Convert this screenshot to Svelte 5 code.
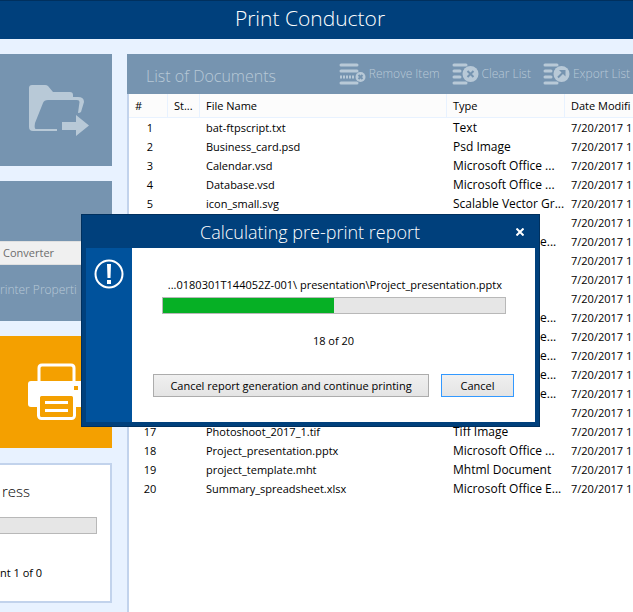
<script lang="ts">
  interface Doc {
    name: string
    type: string
  }

  const docs: Doc[] = [
    { name: 'bat-ftpscript.txt', type: 'Text' },
    { name: 'Business_card.psd', type: 'Psd Image' },
    { name: 'Calendar.vsd', type: 'Microsoft Office ...' },
    { name: 'Database.vsd', type: 'Microsoft Office ...' },
    { name: 'icon_small.svg', type: 'Scalable Vector Gr...' },
    { name: 'a.txt', type: 'Text' },
    { name: 'b.pdf', type: 'Acrobat Docume...' },
    { name: 'c.txt', type: 'Text' },
    { name: 'd.txt', type: 'Text' },
    { name: 'e.txt', type: 'Text' },
    { name: 'f.pdf', type: 'Acrobat Docume...' },
    { name: 'g.pdf', type: 'Acrobat Docume...' },
    { name: 'h.pdf', type: 'Acrobat Docume...' },
    { name: 'i.pdf', type: 'Acrobat Docume...' },
    { name: 'j.pdf', type: 'Acrobat Docume...' },
    { name: 'k.txt', type: 'Text' },
    { name: 'Photoshoot_2017_1.tif', type: 'Tiff Image' },
    { name: 'Project_presentation.pptx', type: 'Microsoft Office ...' },
    { name: 'project_template.mht', type: 'Mhtml Document' },
    { name: 'Summary_spreadsheet.xlsx', type: 'Microsoft Office E...' },
  ]

  let dialogOpen = $state(true)
  let progress = $state(50)
</script>

<div class="app">
  <header class="titlebar"><h1>Print Conductor</h1></header>

  <div class="main">
    <aside class="side">
      <button class="tile" aria-label="Add documents">
        <svg width="62" height="51" viewBox="0 0 62 51">
          <path d="M4 0H17Q19 0 20 1L25 7H42Q45 7 45 10V12H50Q56 12 56 17L53 27Q52 28 50 28L51.500 17Q51.500 15 49 15H20Q16 15 15 18L7 38Q6 44 8 44H29V46H5Q1 46 1 42V3Q1 0 4 0Z" />
          <path d="M48 30L61 40.500L48 51V45H34V37H48Z" />
        </svg>
      </button>

      <section class="printer">
        <select aria-label="Printer">
          <option>Converter</option>
        </select>
        <button class="props">rinter Properti</button>
      </section>

      <button class="tile print" aria-label="Start printing">
        <svg width="60" height="58" viewBox="0 0 60 58">
          <path class="outline" d="M11 20V5Q11 2 14 2H43Q46 2 46 5V20" />
          <path d="M3 18H54Q58 18 58 21V41Q58 44 55 44H3Q0 44 0 41V21Q0 18 3 18Z" />
          <rect class="paper" x="10.500" y="31.500" width="36" height="24" rx="3" />
          <path d="M17 38H40V41H17ZM17 46H40V49H17Z" />
          <rect class="lamp" x="46" y="23" width="4" height="4" />
        </svg>
      </button>

      <section class="progress-card">
        <h2>ress</h2>
        <div class="bar" role="progressbar" aria-label="Printing" aria-valuenow="0"></div>
        <p>nt 1 of 0</p>
      </section>
    </aside>

    <section class="docs">
      <div class="toolbar">
        <h2>List of Documents</h2>
        <button>
          <svg width="27" height="22" viewBox="0 0 27 22">
            <path class="line" d="M2 2H18M2 8H18M2 20H18" />
            <path class="dots" d="M1 14H16" />
            <circle cx="21.500" cy="14" r="5" />
            <path class="mark" d="M19.500 12L23.500 16M23.500 12L19.500 16" />
          </svg>
          Remove Item
        </button>
        <button>
          <svg width="27" height="22" viewBox="0 0 27 22">
            <path class="line" d="M2 2H14M2 8H8M2 14H8M2 20H14" />
            <circle cx="18.500" cy="11" r="8" />
            <path class="mark" d="M15.500 8L21.500 14M21.500 8L15.500 14" />
          </svg>
          Clear List
        </button>
        <button>
          <svg width="27" height="22" viewBox="0 0 27 22">
            <path class="line" d="M2 2H14M2 8H8M2 14H8M2 20H14" />
            <circle cx="18.500" cy="11" r="8" />
            <path class="mark" d="M15 14.500L21 8.500" />
            <path class="head" d="M16 7H22.500V13.500Z" />
          </svg>
          Export List
        </button>
      </div>

      <div class="list">
        <table>
          <colgroup>
            <col class="c-num" />
            <col class="c-status" />
            <col class="c-name" />
            <col class="c-type" />
            <col />
          </colgroup>
          <thead>
            <tr>
              <th>#</th>
              <th>St...</th>
              <th>File Name</th>
              <th>Type</th>
              <th>Date Modifi</th>
            </tr>
          </thead>
          <tbody>
            {#each docs as doc, i}
              <tr>
                <td class="num">{i + 1}</td>
                <td></td>
                <td>{doc.name}</td>
                <td class="type">{doc.type}</td>
                <td>7/20/2017 1</td>
              </tr>
            {/each}
          </tbody>
        </table>
      </div>
    </section>
  </div>

  {#if dialogOpen}
    <div class="dialog" role="dialog" aria-labelledby="dialog-title">
      <div class="dialog-head">
        <h2 id="dialog-title">Calculating pre-print report</h2>
        <button class="close" aria-label="Close" onclick={() => (dialogOpen = false)}>
          <svg width="8" height="8" viewBox="0 0 8 8"><path d="M0.500 0.500L7.500 7.500M7.500 0.500L0.500 7.500" /></svg>
        </button>
      </div>
      <div class="dialog-main">
        <div class="dialog-side">
          <svg width="30" height="30" viewBox="0 0 30 30">
            <circle cx="15" cy="15" r="13.500" />
            <path d="M13 5H17L16.500 19H13.500ZM13 21H17V25H13Z" />
          </svg>
        </div>
        <div class="dialog-body">
          <p class="path">...0180301T144052Z-001\ presentation\Project_presentation.pptx</p>
          <div class="bar" role="progressbar" aria-label="Report" aria-valuenow={progress}>
            <div class="fill" style="width: {progress}%"></div>
          </div>
          <p class="count">18 of 20</p>
          <div class="actions">
            <button class="wide">Cancel report generation and continue printing</button>
            <button class="cancel" onclick={() => (dialogOpen = false)}>Cancel</button>
          </div>
        </div>
      </div>
    </div>
  {/if}
</div>

<style>
  :global(body) {
    background: #e8f2ff;
  }

  .app {
    position: relative;
    display: flex;
    flex-direction: column;
    min-height: 100vh;
    overflow: hidden;
    font-family: 'Open Sans', 'Noto Sans', sans-serif;
    font-size: 11px;
    line-height: 18px;
    color: #000;
  }

  h1, h2, p {
    margin: 0;
    font-weight: 300;
  }

  button, select {
    margin: 0;
    padding: 0;
    border: none;
    border-radius: 0;
    font: inherit;
    color: inherit;
  }

  svg {
    display: block;
    flex: none;
  }

  .titlebar {
    height: 38px;
    padding-right: 13px;
    border-top: 1px solid #00305e;
    background: #00407c;
    color: #fff;
    text-align: center;
  }

  .titlebar h1 {
    font-size: 21px;
    line-height: 34px;
  }

  .main {
    flex: 1;
    display: flex;
    gap: 15px;
    padding-top: 15px;
  }

  .side {
    flex: none;
    display: flex;
    flex-direction: column;
    gap: 15px;
    width: 112px;
  }

  .tile {
    display: flex;
    align-items: center;
    height: 112px;
    padding-left: 28px;
    background: #7694b0;
    fill: #b8c9d7;
  }

  .print {
    background: #f4a000;
    fill: #fff;
  }

  .outline {
    fill: none;
    stroke: #fff;
    stroke-width: 3;
  }

  .paper {
    fill: #f4a000;
    stroke: #fff;
    stroke-width: 3;
  }

  .lamp {
    fill: #f4a000;
  }

  .printer {
    display: flex;
    flex-direction: column;
    align-items: flex-start;
    gap: 16px;
    height: 80px;
    padding-top: 60px;
    background: #7694b0;
  }

  select {
    appearance: none;
    width: 100%;
    height: 24px;
    padding-left: 3px;
    border: 1px solid #e0e0e0;
    border-left: none;
    background: #f0f0f0;
    color: #6d6d6d;
  }

  .props {
    background: none;
    font-size: 12px;
    font-weight: 300;
    color: #b8c9d7;
    white-space: nowrap;
  }

  .progress-card {
    display: flex;
    flex-direction: column;
    height: 136px;
    border: 2px solid #c2d3ec;
    border-left: none;
    background: #fff;
  }

  .progress-card h2 {
    padding: 16px 0 16px 2px;
    font-size: 15px;
    line-height: 20px;
  }

  .progress-card .bar {
    margin-right: 13px;
    border-left: none;
  }

  .progress-card p {
    padding-top: 30px;
    font-weight: 400;
  }

  .bar {
    height: 15px;
    border: 1px solid #b8b8b8;
    background: #e6e6e6;
  }

  .fill {
    height: 100%;
    background: #06b025;
  }

  .docs {
    flex: 1;
    display: flex;
    flex-direction: column;
    min-width: 0;
  }

  .list {
    flex: 1;
    border-left: 2px solid #c2d3ec;
    background: #fff;
  }

  .toolbar {
    display: flex;
    align-items: center;
    gap: 12px;
    height: 40px;
    padding: 0 3px 0 19px;
    background: #7694b0;
    color: #b8c9d7;
  }

  .toolbar h2 {
    margin-right: auto;
    padding-top: 3px;
    font-size: 16px;
    white-space: nowrap;
  }

  .toolbar button {
    display: flex;
    align-items: center;
    gap: 3px;
    background: none;
    font-size: 12px;
    font-weight: 300;
    white-space: nowrap;
  }

  .toolbar svg {
    fill: #b8c9d7;
  }

  .line, .dots {
    stroke: #b8c9d7;
    stroke-width: 3;
    stroke-linecap: round;
  }

  .dots {
    stroke-linecap: butt;
    stroke-dasharray: 2 1;
  }

  .mark {
    stroke: #7694b0;
    stroke-width: 2;
  }

  .head {
    fill: #7694b0;
  }

  table {
    width: 100%;
    table-layout: fixed;
    border-collapse: separate;
    border-spacing: 0;
  }

  .c-num {
    width: 39px;
  }

  .c-status {
    width: 32px;
  }

  .c-name {
    width: 247px;
  }

  .c-type {
    width: 118px;
  }

  th, td {
    height: 19px;
    padding: 0 0 0 6px;
    line-height: 19px;
    font-weight: 400;
    text-align: left;
    white-space: nowrap;
  }

  th {
    height: 23px;
    border-right: 1px solid #e8f2ff;
    border-bottom: 1px solid #e8f2ff;
    background: #fcfcfc;
  }

  th:last-child {
    border-right: none;
  }

  .num {
    padding: 0 0 0 3px;
    text-align: center;
  }

  .type {
    font-size: 12px;
  }

  .dialog {
    position: absolute;
    top: 214px;
    left: 81px;
    width: 449px;
    border: 1px solid #00305e;
    background: #00407c;
    padding: 0 4px 4px;
  }

  .dialog-head {
    display: flex;
    align-items: center;
    height: 33px;
    color: #fff;
  }

  .dialog-head h2 {
    flex: 1;
    padding-left: 18px;
    font-size: 18px;
    line-height: 24px;
    text-align: center;
  }

  .close {
    padding: 6px 11px 6px 0;
    background: none;
  }

  .close path {
    stroke: #fff;
    stroke-width: 2;
  }

  .dialog-main {
    display: flex;
    background: #fff;
  }

  .dialog-side {
    flex: none;
    display: flex;
    justify-content: center;
    width: 46px;
    padding-top: 11px;
    background: #00529c;
  }

  .dialog-side circle {
    fill: none;
    stroke: #fff;
    stroke-width: 2;
  }

  .dialog-side path {
    fill: #fff;
  }

  .dialog-body {
    flex: 1;
    display: flex;
    flex-direction: column;
    padding: 28px 21px 25px;
  }

  .dialog-body p {
    font-weight: 400;
  }

  .dialog-body .bar {
    margin: 3px 8px 0 9px;
  }

  .path {
    padding-right: 12px;
    text-align: right;
    white-space: nowrap;
  }

  .count {
    padding: 18px 0 24px;
    text-align: center;
  }

  .actions {
    display: flex;
    gap: 12px;
  }

  .actions button {
    height: 23px;
    border: 1px solid #acacac;
    background: linear-gradient(#f0f0f0, #e4e4e4);
    white-space: nowrap;
  }

  .wide {
    flex: 1;
  }

  .actions .cancel {
    width: 73px;
    border-color: #3399ff;
  }
</style>
